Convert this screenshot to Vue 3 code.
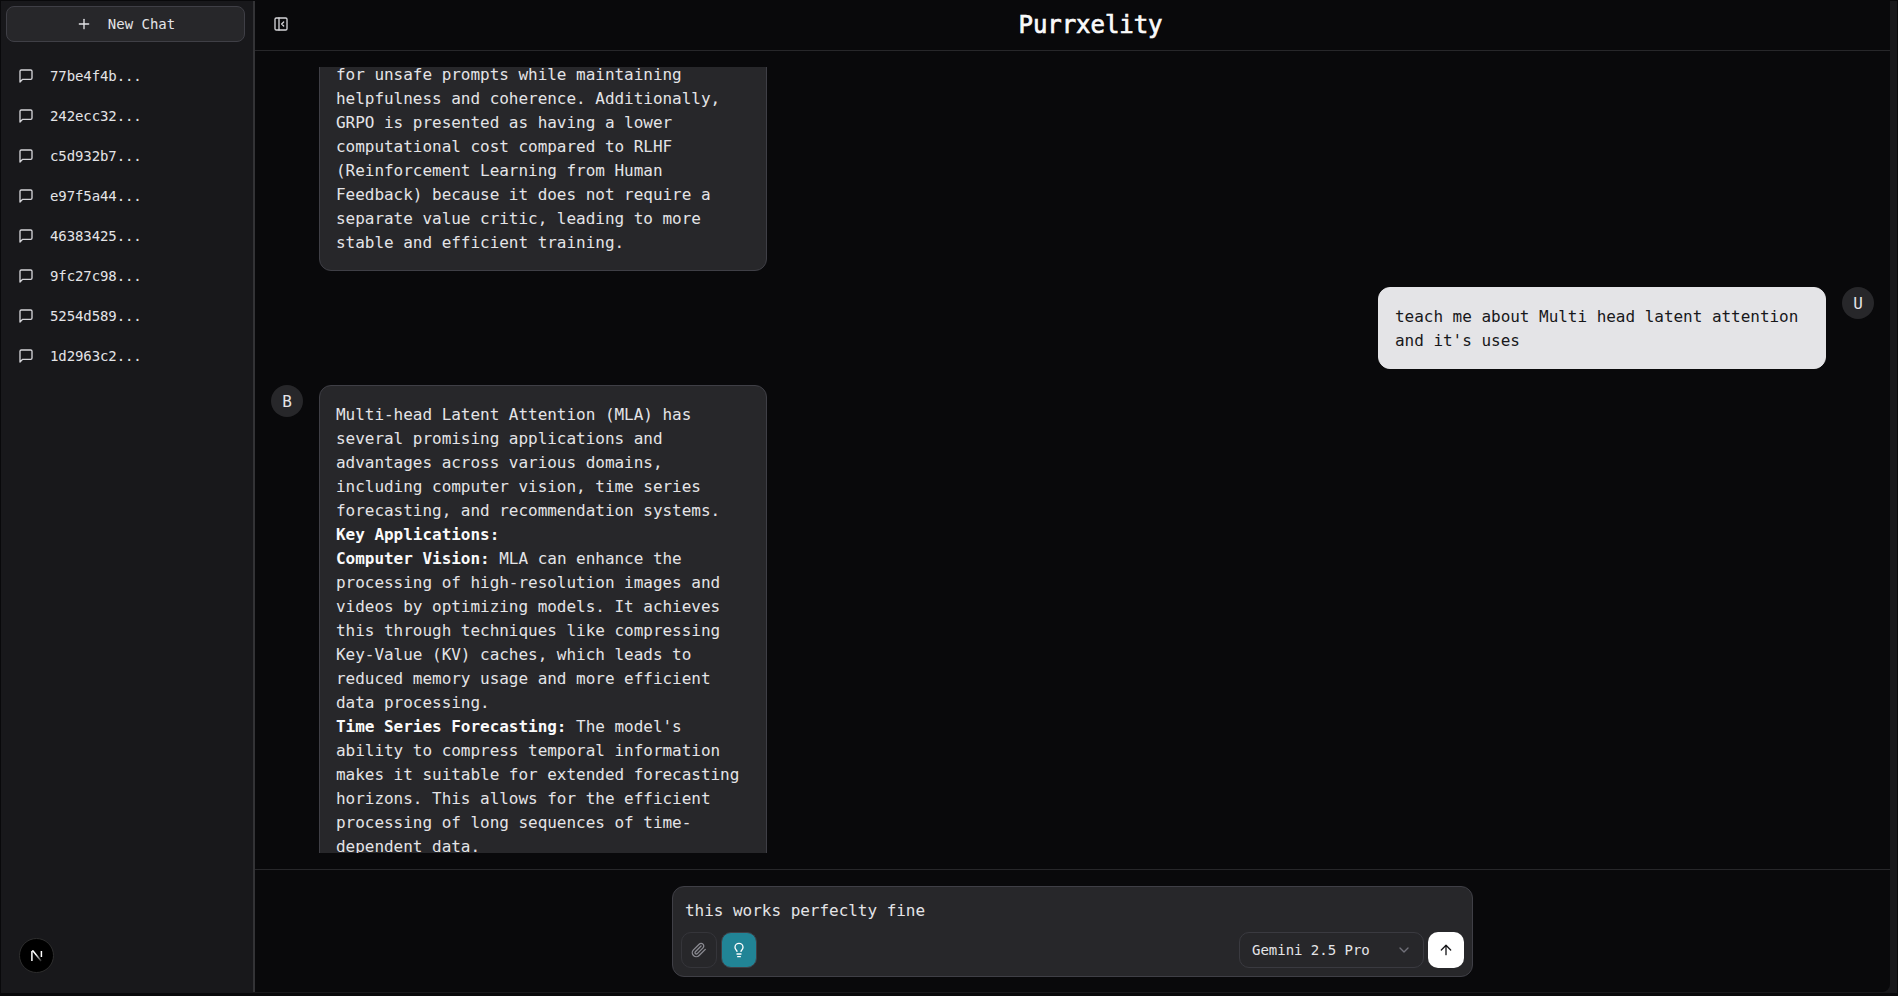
<template>
  <div class="shell">
    <aside class="sidebar">
      <button class="new-chat">
        <svg class="icon" viewBox="0 0 24 24"><path d="M5 12h14" /><path d="M12 5v14" /></svg>
        <span>New Chat</span>
      </button>

      <ul class="chat-list">
        <li v-for="chat in chats" :key="chat" class="chat-row">
          <svg class="icon chat-icon" viewBox="0 0 24 24">
            <path d="M21 15a2 2 0 0 1-2 2H7l-4 4V5a2 2 0 0 1 2-2h14a2 2 0 0 1 2 2z" />
          </svg>
          <span>{{ chat }}...</span>
        </li>
      </ul>

      <div class="dev-badge">
        <svg viewBox="0 0 16 16" width="16" height="16" fill="none">
          <path d="M2.9 3v10" stroke="#fff" stroke-width="1.5" />
          <path d="M3 3h1.1l8 10" stroke="url(#fade)" stroke-width="1.5" />
          <path d="M12.4 3v6" stroke="#fff" stroke-width="1.5" />
          <defs>
            <linearGradient id="fade" x1="3" y1="3" x2="12" y2="14" gradientUnits="userSpaceOnUse">
              <stop offset="0.35" stop-color="#fff" />
              <stop offset="1" stop-color="#fff" stop-opacity="0.1" />
            </linearGradient>
          </defs>
        </svg>
      </div>
    </aside>

    <main class="main">
      <header class="topbar">
        <button class="toggle">
          <svg class="icon" viewBox="0 0 24 24">
            <rect x="3" y="3" width="18" height="18" rx="2" />
            <path d="M9 3v18" />
            <path d="m16 15-3-3 3-3" />
          </svg>
        </button>
        <h1 class="title">Purrxelity</h1>
      </header>

      <section class="messages">
        <div class="row row-cut">
          <div class="bubble bot">
            <p v-for="(line, i) in firstReply" :key="i">{{ line }}</p>
          </div>
        </div>

        <div class="row row-user">
          <div class="bubble user">teach me about Multi head latent attention and it's uses</div>
          <div class="avatar">U</div>
        </div>

        <div class="row">
          <div class="avatar">B</div>
          <div class="bubble bot">
            <p v-for="(para, i) in secondReply" :key="i">
              <strong v-if="para.bold">{{ para.bold }}</strong>
              {{ para.text }}
            </p>
          </div>
        </div>
      </section>

      <footer class="footer">
        <div class="composer">
          <textarea v-model="draft" class="input" rows="1"></textarea>
          <div class="tools">
            <button class="tool">
              <svg class="icon" viewBox="0 0 24 24">
                <path d="m21.44 11.05-9.25 9.25a6 6 0 0 1-8.49-8.49l8.57-8.57A4 4 0 1 1 18 8.84l-8.59 8.57a2 2 0 0 1-2.83-2.83l8.49-8.48" />
              </svg>
            </button>
            <button class="tool tool-on">
              <svg class="icon" viewBox="0 0 24 24">
                <path d="M15 14c.2-1 .7-1.7 1.5-2.5 1-.9 1.5-2.2 1.5-3.5A6 6 0 0 0 6 8c0 1 .2 2.2 1.5 3.5.7.7 1.3 1.5 1.5 2.5" />
                <path d="M9 18h6" />
                <path d="M10 22h4" />
              </svg>
            </button>
            <div class="model">
              <span>Gemini 2.5 Pro</span>
              <svg class="icon chevron" viewBox="0 0 24 24"><path d="m6 9 6 6 6-6" /></svg>
            </div>
            <button class="send">
              <svg class="icon" viewBox="0 0 24 24"><path d="m5 12 7-7 7 7" /><path d="M12 19V5" /></svg>
            </button>
          </div>
        </div>
      </footer>
    </main>
  </div>
</template>

<script setup>
import { ref } from "vue";

const draft = ref("this works perfeclty fine");

const chats = [
  "77be4f4b",
  "242ecc32",
  "c5d932b7",
  "e97f5a44",
  "46383425",
  "9fc27c98",
  "5254d589",
  "1d2963c2",
];

const firstReply = [
  "for unsafe prompts while maintaining helpfulness and coherence. Additionally, GRPO is presented as having a lower computational cost compared to RLHF (Reinforcement Learning from Human Feedback) because it does not require a separate value critic, leading to more stable and efficient training.",
];

const secondReply = [
  {
    text: "Multi-head Latent Attention (MLA) has several promising applications and advantages across various domains, including computer vision, time series forecasting, and recommendation systems.",
  },
  { bold: "Key Applications:" },
  {
    bold: "Computer Vision:",
    text: "MLA can enhance the processing of high-resolution images and videos by optimizing models. It achieves this through techniques like compressing Key-Value (KV) caches, which leads to reduced memory usage and more efficient data processing.",
  },
  {
    bold: "Time Series Forecasting:",
    text: "The model's ability to compress temporal information makes it suitable for extended forecasting horizons. This allows for the efficient processing of long sequences of time-dependent data.",
  },
];
</script>

<style>
html,
body {
  margin: 0;
  background: #09090b;
}
</style>

<style scoped>
.shell {
  display: flex;
  height: 992px;
  margin: 1px 1px 3px;
  background: #18181b;
  color: #e4e4e7;
  font-family: "DejaVu Sans Mono", "Liberation Mono", monospace;
}

button {
  font: inherit;
  color: inherit;
  cursor: pointer;
}

.icon {
  width: 16px;
  height: 16px;
  flex-shrink: 0;
  fill: none;
  stroke: currentColor;
  stroke-width: 2;
  stroke-linecap: round;
  stroke-linejoin: round;
}

/* sidebar */
.sidebar {
  display: flex;
  flex-direction: column;
  width: 252px;
  flex-shrink: 0;
  padding: 5px 8px 20px 5px;
  box-sizing: border-box;
}

.new-chat {
  display: flex;
  align-items: center;
  justify-content: center;
  gap: 16px;
  height: 36px;
  padding: 0;
  background: #27272a;
  border: 1px solid #3f3f46;
  border-radius: 8px;
  font-size: 14px;
  letter-spacing: -0.02px;
}

.chat-list {
  list-style: none;
  margin: 14px 0 0;
  padding: 0;
}

.chat-row {
  display: flex;
  align-items: center;
  gap: 16px;
  height: 40px;
  padding-left: 12px;
  font-size: 14px;
  letter-spacing: -0.1px;
}

.chat-icon {
  color: #d4d4d8;
}

.dev-badge {
  display: flex;
  align-items: center;
  justify-content: center;
  width: 35px;
  height: 35px;
  margin: auto 0 0 13px;
  box-sizing: border-box;
  background: #000;
  border: 1px solid #2e2e2e;
  border-radius: 50%;
}

/* main column */
.main {
  display: flex;
  flex-direction: column;
  flex: 1;
  min-width: 0;
  height: 991px;
  margin-right: 7px;
  background: #09090b;
  border-left: 2px solid #333336;
  border-bottom-right-radius: 8px;
}

.topbar {
  display: flex;
  align-items: center;
  flex-shrink: 0;
  height: 50px;
  padding: 0 8px 3px;
  box-sizing: border-box;
  border-bottom: 1px solid #27272a;
}

.toggle {
  display: flex;
  align-items: center;
  justify-content: center;
  width: 36px;
  height: 36px;
  padding: 0;
  background: transparent;
  border: 0;
  color: #d4d4d8;
}

.title {
  flex: 1;
  margin: 0;
  padding-top: 2px;
  text-align: center;
  font-size: 24px;
  line-height: 30px;
  font-weight: 400;
  letter-spacing: -0.05px;
  color: #fafafa;
  -webkit-text-stroke: 0.7px #fafafa;
}

.messages {
  display: flex;
  flex-direction: column;
  flex: 1;
  gap: 16px;
  min-height: 0;
  margin: 16px;
  overflow: hidden;
}

.row {
  display: flex;
  align-items: flex-start;
  gap: 16px;
  flex-shrink: 0;
}

/* reply that is already scrolled past the top edge */
.row-cut {
  margin-top: -22px;
  padding-left: 48px;
}

.row-user {
  justify-content: flex-end;
}

.avatar {
  display: flex;
  align-items: center;
  justify-content: center;
  width: 32px;
  height: 32px;
  flex-shrink: 0;
  background: #27272a;
  border-radius: 50%;
  font-size: 16px;
}

.bubble {
  width: 448px;
  padding: 17px 16px 15px;
  box-sizing: border-box;
  border: 1px solid transparent;
  border-radius: 12px;
  font-size: 16px;
  line-height: 24px;
  letter-spacing: -0.03px;
}

.bubble p {
  margin: 0;
}

.bubble strong {
  color: #fafafa;
}

.bot {
  background: #27272a;
  border-color: #3f3f46;
}

.user {
  background: #e4e4e7;
  border-color: #e4e4e7;
  color: #18181b;
}

/* composer */
.footer {
  flex-shrink: 0;
  padding: 16px 16px 15px;
  border-top: 1px solid #27272a;
}

.composer {
  width: 801px;
  margin: 0 auto;
  padding: 12px 8px 8px;
  box-sizing: border-box;
  background: #27272a;
  border: 1px solid #3f3f46;
  border-radius: 12px;
}

.input {
  display: block;
  width: 100%;
  height: 24px;
  padding: 0 4px;
  box-sizing: border-box;
  background: transparent;
  border: 0;
  outline: 0;
  resize: none;
  color: #e4e4e7;
  font: inherit;
  font-size: 16px;
  line-height: 24px;
  letter-spacing: -0.03px;
}

.tools {
  display: flex;
  align-items: center;
  gap: 4px;
  margin-top: 9px;
}

.tool {
  display: flex;
  align-items: center;
  justify-content: center;
  width: 36px;
  height: 36px;
  padding: 0;
  background: transparent;
  border: 1px solid #35353a;
  border-radius: 10px;
  color: #8b8b92;
}

.tool-on {
  background: #218496;
  border-color: #3f3f46;
  color: #fff;
}

.model {
  display: flex;
  align-items: center;
  justify-content: space-between;
  width: 185px;
  height: 36px;
  margin-left: auto;
  padding: 0 11px 0 12px;
  box-sizing: border-box;
  border: 1px solid #3a3a40;
  border-radius: 10px;
  font-size: 14px;
  letter-spacing: -0.02px;
}

.chevron {
  color: #71717a;
}

.send {
  display: flex;
  align-items: center;
  justify-content: center;
  width: 36px;
  height: 36px;
  padding: 0;
  background: #fff;
  border: 0;
  border-radius: 10px;
  color: #18181b;
}
</style>
